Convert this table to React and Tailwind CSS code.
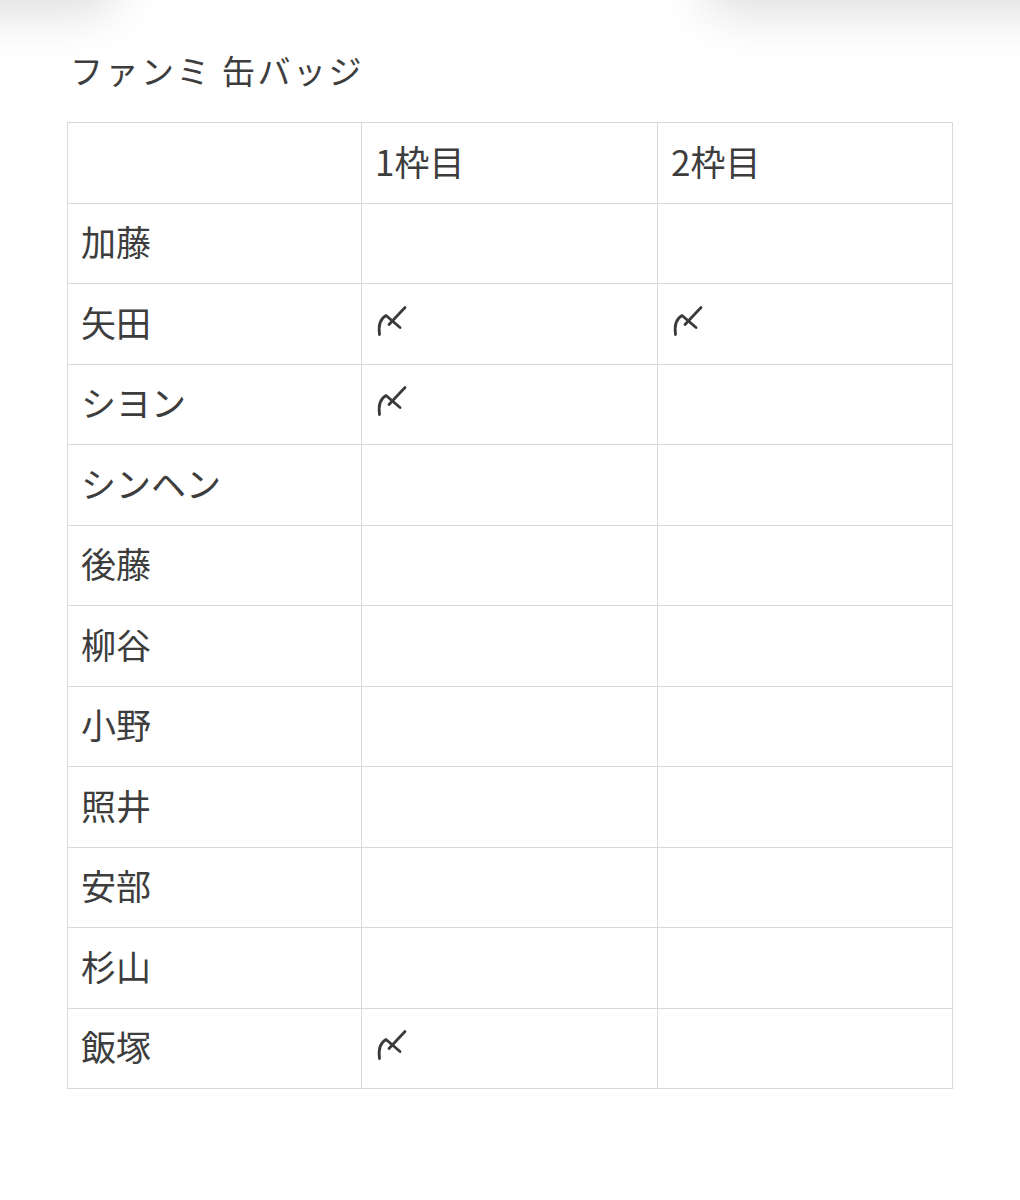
import React from "react";

const rows = [
  { name: "加藤", a: false, b: false },
  { name: "矢田", a: true, b: true },
  { name: "シヨン", a: true, b: false },
  { name: "シンヘン", a: false, b: false },
  { name: "後藤", a: false, b: false },
  { name: "柳谷", a: false, b: false },
  { name: "小野", a: false, b: false },
  { name: "照井", a: false, b: false },
  { name: "安部", a: false, b: false },
  { name: "杉山", a: false, b: false },
  { name: "飯塚", a: true, b: false },
];

function Mark() {
  return (
    <svg width="40" height="38" viewBox="0 0 40 38" fill="none" className="block">
      <path
        d="M9.5 31.5 C8.5 24, 9.5 16, 16 12.5 L30 24.5"
        stroke="#3a3a3a"
        strokeWidth="2.8"
        strokeLinecap="round"
        strokeLinejoin="round"
      />
      <path d="M35 4.5 L19 21.5" stroke="#3a3a3a" strokeWidth="2.8" strokeLinecap="round" />
    </svg>
  );
}

export default function App() {
  return (
    <div
      className="relative w-[1020px] min-h-[1200px] bg-white overflow-hidden text-[#3d3d3d]"
      style={{ fontFamily: '"Noto Sans CJK JP", "Noto Sans", sans-serif' }}
    >
      {/* soft shadows of floating bars above the page */}
      <div className="absolute -left-[120px] -top-[70px] w-[240px] h-[70px] rounded-full bg-white shadow-[0_12px_50px_rgba(0,0,0,0.14)]" />
      <div className="absolute left-[700px] -top-[70px] w-[420px] h-[70px] rounded-full bg-white shadow-[0_14px_50px_rgba(0,0,0,0.13)]" />

      <div className="pt-[46px] pl-[70px]">
        <h1 className="text-[33px] leading-[48px] font-normal tracking-[2.5px]">ファンミ 缶バッジ</h1>
      </div>

      <table className="mt-[28px] ml-[67px] w-[885px] table-fixed border-collapse text-[35px]">
        <colgroup>
          <col className="w-[294px]" />
          <col className="w-[296px]" />
          <col className="w-[295px]" />
        </colgroup>
        <thead>
          <tr className="h-[80.5px]">
            <th className="border border-[#d9d9d9]" />
            <th className="border border-[#d9d9d9] px-[13px] pb-1 text-left font-normal">1枠目</th>
            <th className="border border-[#d9d9d9] px-[13px] pb-1 text-left font-normal">2枠目</th>
          </tr>
        </thead>
        <tbody>
          {rows.map((r) => (
            <tr key={r.name} className="h-[80.5px]">
              <td className="border border-[#d9d9d9] px-[13px] pb-1">{r.name}</td>
              <td className="border border-[#d9d9d9] px-[8px] pb-1">{r.a && <Mark />}</td>
              <td className="border border-[#d9d9d9] px-[8px] pb-1">{r.b && <Mark />}</td>
            </tr>
          ))}
        </tbody>
      </table>
    </div>
  );
}
